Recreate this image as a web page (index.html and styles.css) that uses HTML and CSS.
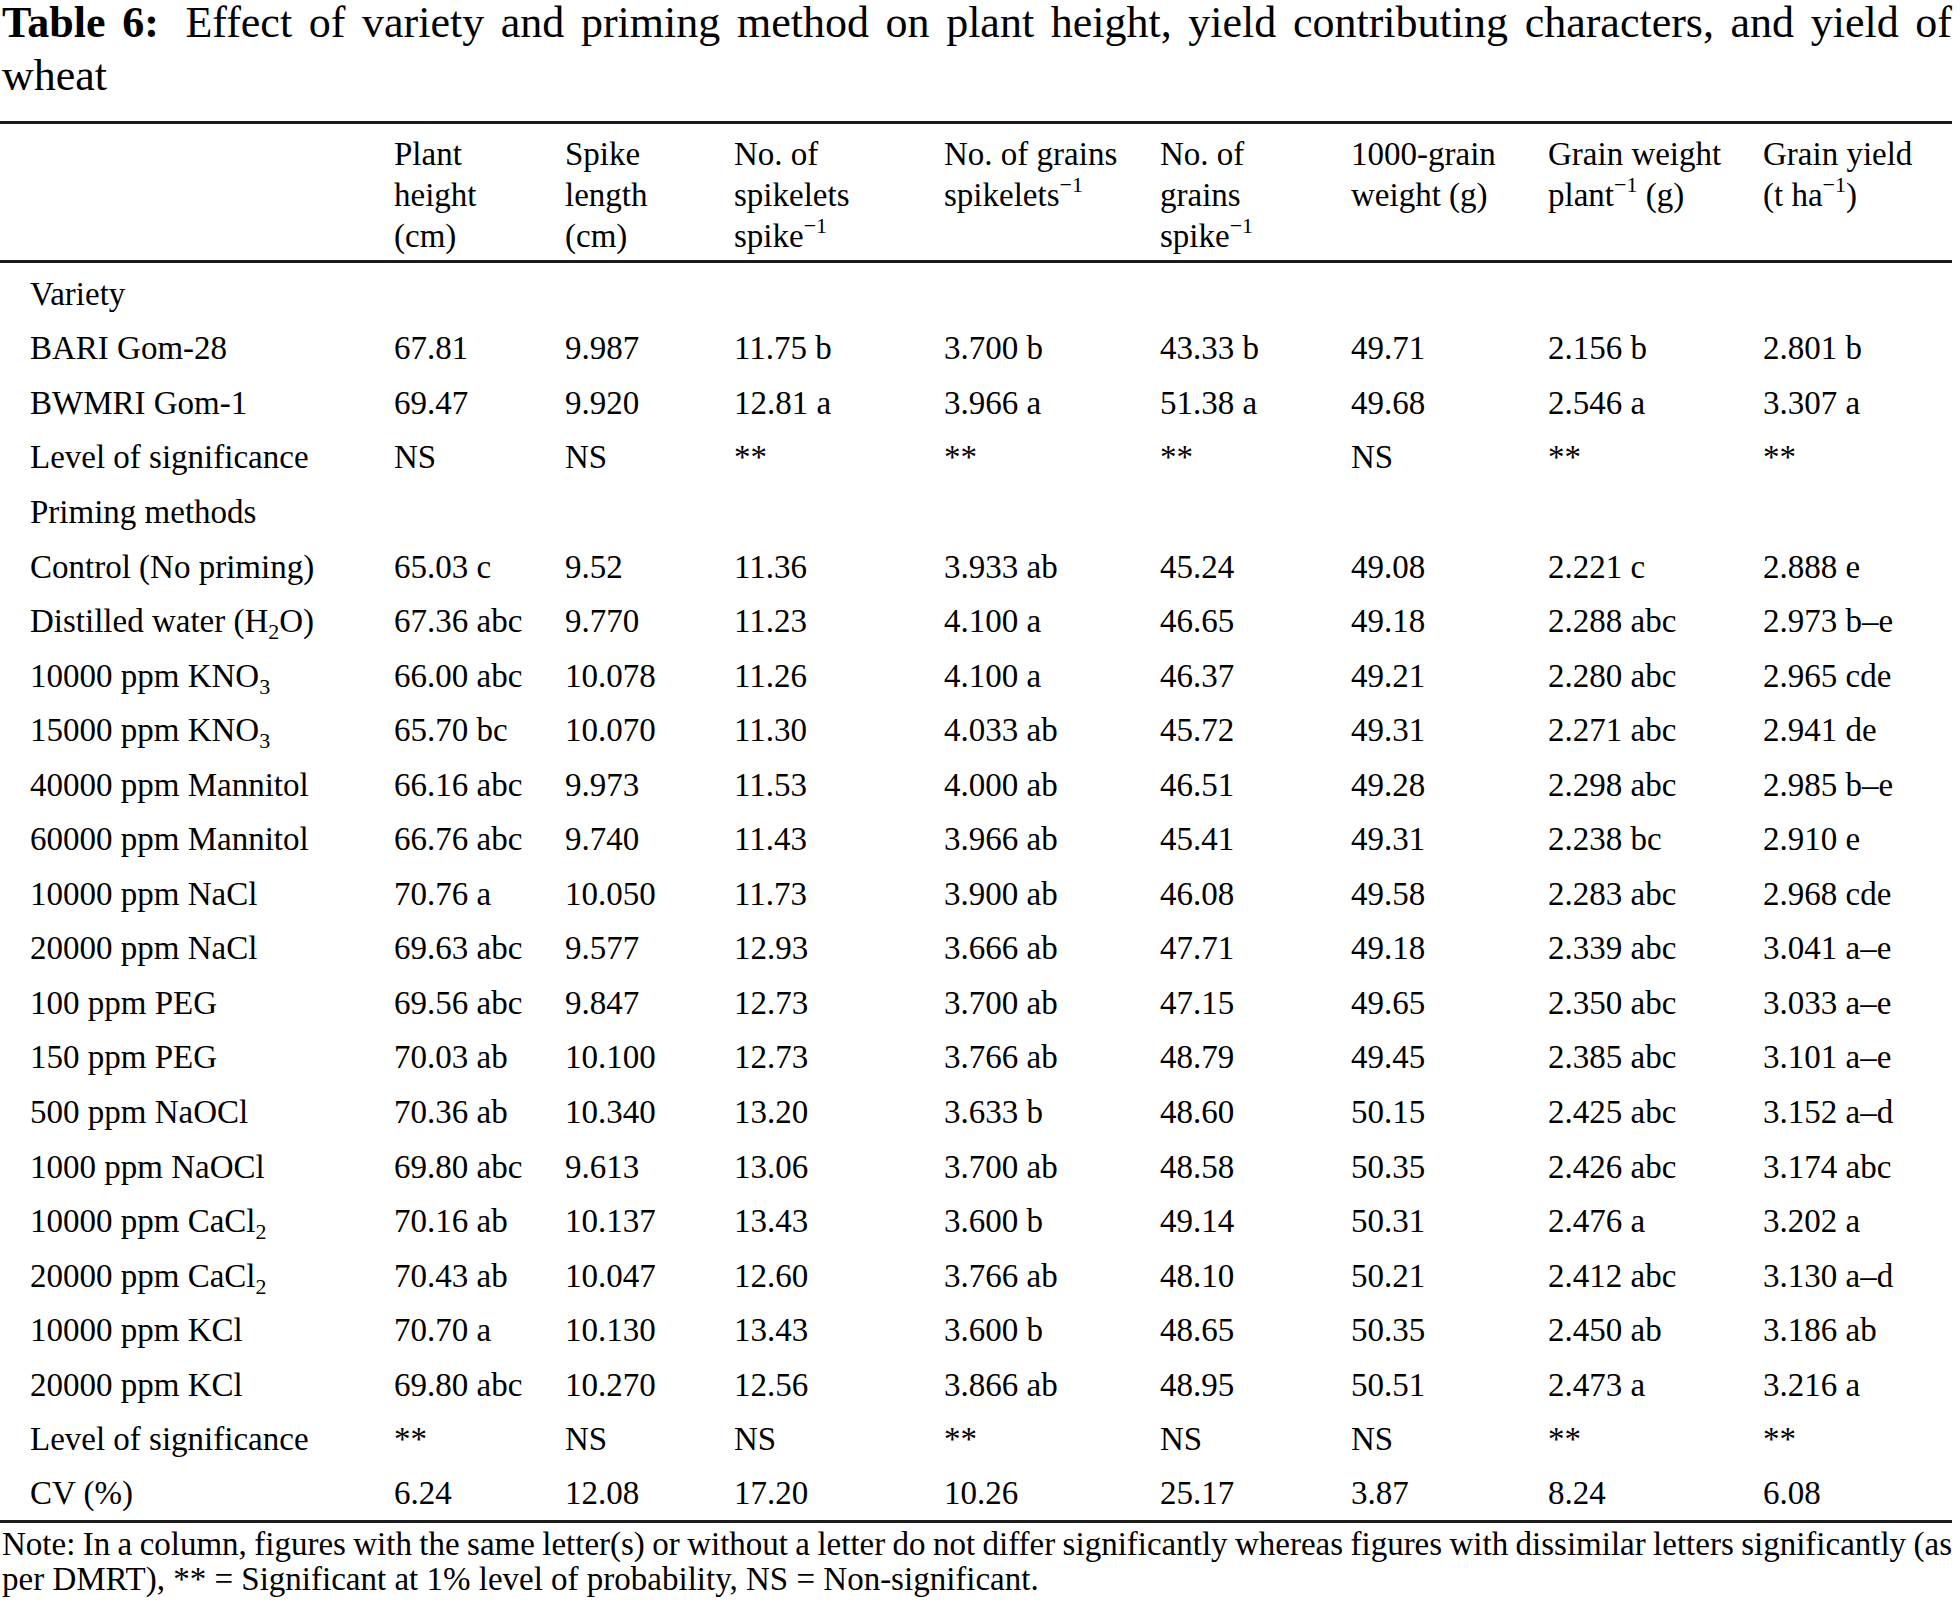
FILE: index.html
```html
<!DOCTYPE html>
<html lang="en">
<head>
<meta charset="utf-8">
<title>Table 6</title>
<link rel="stylesheet" href="styles.css">
</head>
<body>
<div class="page">
  <h1 class="caption"><b class="cap-label">Table 6:</b> Effect of variety and priming method on plant height, yield contributing characters, and yield of wheat</h1>
  <table class="data">
    <colgroup>
      <col class="c-label">
      <col class="c-plant">
      <col class="c-spike">
      <col class="c-spikelets">
      <col class="c-gps">
      <col class="c-grains">
      <col class="c-tgw">
      <col class="c-gwp">
      <col class="c-yield">
    </colgroup>
    <thead>
      <tr>
        <th></th>
        <th>Plant<br>height<br>(cm)</th>
        <th>Spike<br>length<br>(cm)</th>
        <th>No. of<br>spikelets<br>spike<sup>−1</sup></th>
        <th>No. of grains<br>spikelets<sup>−1</sup></th>
        <th>No. of<br>grains<br>spike<sup>−1</sup></th>
        <th>1000-grain<br>weight (g)</th>
        <th>Grain weight<br>plant<sup>−1</sup> (g)</th>
        <th>Grain yield<br>(t ha<sup>−1</sup>)</th>
      </tr>
    </thead>
    <tbody>
      <tr><td>Variety</td><td></td><td></td><td></td><td></td><td></td><td></td><td></td><td></td></tr>
      <tr><td>BARI Gom-28</td><td>67.81</td><td>9.987</td><td>11.75 b</td><td>3.700 b</td><td>43.33 b</td><td>49.71</td><td>2.156 b</td><td>2.801 b</td></tr>
      <tr><td>BWMRI Gom-1</td><td>69.47</td><td>9.920</td><td>12.81 a</td><td>3.966 a</td><td>51.38 a</td><td>49.68</td><td>2.546 a</td><td>3.307 a</td></tr>
      <tr><td>Level of significance</td><td>NS</td><td>NS</td><td>**</td><td>**</td><td>**</td><td>NS</td><td>**</td><td>**</td></tr>
      <tr><td>Priming methods</td><td></td><td></td><td></td><td></td><td></td><td></td><td></td><td></td></tr>
      <tr><td>Control (No priming)</td><td>65.03 c</td><td>9.52</td><td>11.36</td><td>3.933 ab</td><td>45.24</td><td>49.08</td><td>2.221 c</td><td>2.888 e</td></tr>
      <tr><td>Distilled water (H<sub>2</sub>O)</td><td>67.36 abc</td><td>9.770</td><td>11.23</td><td>4.100 a</td><td>46.65</td><td>49.18</td><td>2.288 abc</td><td>2.973 b–e</td></tr>
      <tr><td>10000 ppm KNO<sub>3</sub></td><td>66.00 abc</td><td>10.078</td><td>11.26</td><td>4.100 a</td><td>46.37</td><td>49.21</td><td>2.280 abc</td><td>2.965 cde</td></tr>
      <tr><td>15000 ppm KNO<sub>3</sub></td><td>65.70 bc</td><td>10.070</td><td>11.30</td><td>4.033 ab</td><td>45.72</td><td>49.31</td><td>2.271 abc</td><td>2.941 de</td></tr>
      <tr><td>40000 ppm Mannitol</td><td>66.16 abc</td><td>9.973</td><td>11.53</td><td>4.000 ab</td><td>46.51</td><td>49.28</td><td>2.298 abc</td><td>2.985 b–e</td></tr>
      <tr><td>60000 ppm Mannitol</td><td>66.76 abc</td><td>9.740</td><td>11.43</td><td>3.966 ab</td><td>45.41</td><td>49.31</td><td>2.238 bc</td><td>2.910 e</td></tr>
      <tr><td>10000 ppm NaCl</td><td>70.76 a</td><td>10.050</td><td>11.73</td><td>3.900 ab</td><td>46.08</td><td>49.58</td><td>2.283 abc</td><td>2.968 cde</td></tr>
      <tr><td>20000 ppm NaCl</td><td>69.63 abc</td><td>9.577</td><td>12.93</td><td>3.666 ab</td><td>47.71</td><td>49.18</td><td>2.339 abc</td><td>3.041 a–e</td></tr>
      <tr><td>100 ppm PEG</td><td>69.56 abc</td><td>9.847</td><td>12.73</td><td>3.700 ab</td><td>47.15</td><td>49.65</td><td>2.350 abc</td><td>3.033 a–e</td></tr>
      <tr><td>150 ppm PEG</td><td>70.03 ab</td><td>10.100</td><td>12.73</td><td>3.766 ab</td><td>48.79</td><td>49.45</td><td>2.385 abc</td><td>3.101 a–e</td></tr>
      <tr><td>500 ppm NaOCl</td><td>70.36 ab</td><td>10.340</td><td>13.20</td><td>3.633 b</td><td>48.60</td><td>50.15</td><td>2.425 abc</td><td>3.152 a–d</td></tr>
      <tr><td>1000 ppm NaOCl</td><td>69.80 abc</td><td>9.613</td><td>13.06</td><td>3.700 ab</td><td>48.58</td><td>50.35</td><td>2.426 abc</td><td>3.174 abc</td></tr>
      <tr><td>10000 ppm CaCl<sub>2</sub></td><td>70.16 ab</td><td>10.137</td><td>13.43</td><td>3.600 b</td><td>49.14</td><td>50.31</td><td>2.476 a</td><td>3.202 a</td></tr>
      <tr><td>20000 ppm CaCl<sub>2</sub></td><td>70.43 ab</td><td>10.047</td><td>12.60</td><td>3.766 ab</td><td>48.10</td><td>50.21</td><td>2.412 abc</td><td>3.130 a–d</td></tr>
      <tr><td>10000 ppm KCl</td><td>70.70 a</td><td>10.130</td><td>13.43</td><td>3.600 b</td><td>48.65</td><td>50.35</td><td>2.450 ab</td><td>3.186 ab</td></tr>
      <tr><td>20000 ppm KCl</td><td>69.80 abc</td><td>10.270</td><td>12.56</td><td>3.866 ab</td><td>48.95</td><td>50.51</td><td>2.473 a</td><td>3.216 a</td></tr>
      <tr><td>Level of significance</td><td>**</td><td>NS</td><td>NS</td><td>**</td><td>NS</td><td>NS</td><td>**</td><td>**</td></tr>
      <tr class="last-row"><td>CV (%)</td><td>6.24</td><td>12.08</td><td>17.20</td><td>10.26</td><td>25.17</td><td>3.87</td><td>8.24</td><td>6.08</td></tr>
    </tbody>
  </table>
  <p class="note"><span class="note-line">Note: In a column, figures with the same letter(s) or without a letter do not differ significantly whereas figures with dissimilar letters significantly (as</span> per DMRT), ** = Significant at 1% level of probability, NS = Non-significant.</p>
</div>
</body>
</html>
```
FILE: styles.css
```css
html, body {
  margin: 0;
  padding: 0;
  background: #ffffff;
}
body {
  font-family: "Liberation Serif", "Times New Roman", serif;
  color: #000000;
}
.page {
  width: 1952px;
}
.caption {
  margin: -4px 0 0 0;
  padding-left: 2px;
  font-size: 44px;
  line-height: 53px;
  font-weight: normal;
  text-align: justify;
}
.cap-label {
  font-weight: bold;
  margin-right: 10px;
}
.data {
  margin-top: 19px;
  width: 1952px;
  border-collapse: collapse;
  table-layout: fixed;
  font-size: 33px;
  border-top: 3px solid #1c1c1c;
  border-bottom: 3px solid #1c1c1c;
}
.c-label { width: 394px; }
.c-plant { width: 171px; }
.c-spike { width: 169px; }
.c-spikelets { width: 210px; }
.c-gps { width: 216px; }
.c-grains { width: 191px; }
.c-tgw { width: 197px; }
.c-gwp { width: 215px; }
.c-yield { width: 189px; }
.data thead tr {
  border-bottom: 3px solid #1c1c1c;
}
.data th {
  text-align: left;
  font-weight: normal;
  vertical-align: top;
  padding: 10px 0 3px 0;
  line-height: 41px;
  white-space: nowrap;
}
.data td {
  padding: 7px 0 0 0;
  height: 47.55px;
  line-height: 40px;
  vertical-align: middle;
  white-space: nowrap;
}
.data .last-row td {
  padding-top: 6px;
  padding-bottom: 3px;
}
.data td:first-child {
  padding-left: 30px;
}
.data sup {
  font-size: 22px;
  line-height: 0;
  vertical-align: 14px;
}
.data sub {
  font-size: 22px;
  line-height: 0;
  vertical-align: -7px;
}
.note {
  margin: 4px 0 0 0;
  font-size: 33px;
  line-height: 35px;
  padding-left: 2px;
}
.note-line {
  display: block;
  word-spacing: -3px;
  text-align: justify;
  text-align-last: justify;
}
```
